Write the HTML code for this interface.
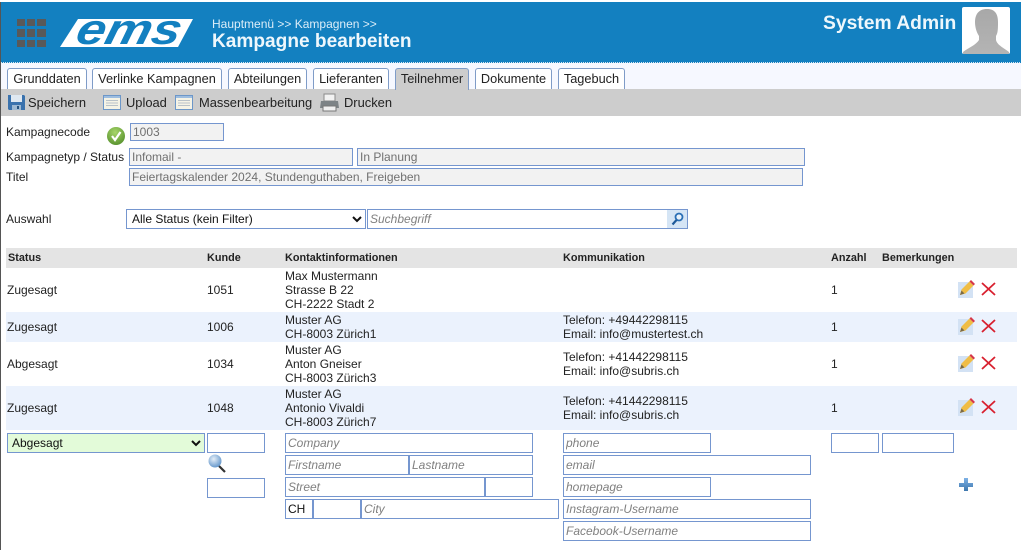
<!DOCTYPE html>
<html lang="de"><head><meta charset="utf-8"><title>Kampagne bearbeiten</title>
<style>
html,body{margin:0;padding:0;background:#fff;width:1021px;height:550px;overflow:hidden}
body{position:relative;font-family:"Liberation Sans",Arial,sans-serif;font-size:12px;color:#222}
.a{position:absolute;white-space:nowrap}
.t{position:absolute;white-space:nowrap;line-height:14px}
.tab{position:absolute;top:68px;height:20px;border:1px solid #7f9cc8;border-bottom:0;border-radius:3px 3px 0 0;background:#fff;box-sizing:content-box;font-size:12.75px;line-height:19px;text-align:center;color:#222}
.tb{position:absolute;top:95px;font-size:12.9px;line-height:15px;color:#222;white-space:nowrap}
.i{position:absolute;box-sizing:border-box;border:1px solid #7596cf;background:#fff;height:20px;margin:0;padding:0 2px 0 2px;font:12px "Liberation Sans",Arial,sans-serif;color:#111;outline:0;border-radius:0}
select.i{padding:0}
.i::placeholder{color:#808080;font-style:italic;opacity:1}
.ro{background:#f2f2f2;color:#707070;height:18px}
.h{position:absolute;top:252px;font-weight:bold;font-size:10.85px;line-height:12px;color:#222;white-space:nowrap}
.row{position:absolute;left:6px;width:1011px}
svg{position:absolute;display:block;overflow:visible}
</style></head><body>
<div class="a" style="left:0;top:2px;width:1021px;height:60px;background:#1380c0"></div>
<div class="a" style="left:0;top:62px;width:1021px;height:1px;background:repeating-linear-gradient(90deg,#1380c0 0 1px,#d9e8f3 1px 2px)"></div>
<div class="a" style="left:0;top:63px;width:1021px;height:26px;background:#f6f8ff"></div>
<div class="a" style="left:0;top:89px;width:1021px;height:27px;background:#cdcdcd"></div>
<div class="a" style="left:0;top:2px;width:1px;height:548px;background:#555"></div>

<svg style="left:17px;top:19px" width="29" height="28"><g fill="#595959"><rect width="8" height="7"/><rect x="10" width="8" height="7"/><rect x="20" width="9" height="7"/><rect y="10" width="8" height="8"/><rect x="10" y="10" width="8" height="8"/><rect x="20" y="10" width="9" height="8"/><rect y="21" width="8" height="7"/><rect x="10" y="21" width="8" height="7"/><rect x="20" y="21" width="9" height="7"/></g></svg>
<svg style="left:60px;top:19px" width="134" height="28" viewBox="0 0 134 28"><path d="M18 0H133L118 28H0Z" fill="#fff"/><text transform="translate(14 25) skewX(-14)" x="0" y="0" font-family="Liberation Sans" font-weight="bold" font-style="italic" font-size="43" fill="#1380c0" textLength="104" lengthAdjust="spacingAndGlyphs">ems</text></svg>

<div class="t" style="left:212px;top:17px;font-size:12px;color:#dcedf8">Hauptmenü &gt;&gt; Kampagnen &gt;&gt;</div>
<div class="t" style="left:212px;top:32px;font-size:19.1px;line-height:20px;font-weight:bold;color:#eef7fc">Kampagne bearbeiten</div>
<div class="t" style="left:823px;top:13px;font-size:19.3px;line-height:21px;font-weight:bold;color:#eef7fc">System Admin</div>
<svg style="left:962px;top:7px" width="48" height="47" viewBox="0 0 48 47"><defs><linearGradient id="g" x1="0" y1="0" x2="0" y2="1"><stop offset="0" stop-color="#a8a8a8"/><stop offset="1" stop-color="#b4b4b4"/></linearGradient></defs><rect width="48" height="47" rx="2" fill="#fff"/><path d="M25 2C17 2 13 7 13 15C13 21 15 26 17 29V33C14 38 6 41 1 45L1 47H47V45C42 41 35 38 34 33V29C36 26 36 21 36 15C36 7 33 2 25 2Z" fill="url(#g)"/></svg>

<div class="tab" style="left:7px;width:78px">Grunddaten</div>
<div class="tab" style="left:92px;width:128px">Verlinke Kampagnen</div>
<div class="tab" style="left:228px;width:77px">Abteilungen</div>
<div class="tab" style="left:313px;width:74px">Lieferanten</div>
<div class="tab" style="left:395px;width:72px;background:#cdcdcd;height:21px">Teilnehmer</div>
<div class="tab" style="left:475px;width:75px">Dokumente</div>
<div class="tab" style="left:558px;width:65px">Tagebuch</div>

<svg style="left:8px;top:94px" width="17" height="17" viewBox="0 0 17 17"><path d="M0 1H16L17 2V16H1L0 15Z" fill="#3a72ad"/><rect x="3" y="1" width="11" height="7" fill="#dfe8f1"/><rect x="4" y="11" width="9" height="5" fill="#9db8d2"/><rect x="9" y="12" width="2" height="3" fill="#24527f"/></svg>
<div class="tb" style="left:28px">Speichern</div>
<svg style="left:103px;top:95px" width="18" height="15" viewBox="0 0 18 15"><rect x=".5" y=".5" width="17" height="14" fill="#f5f3e6" stroke="#6d97c8"/><rect x="1" y="1" width="16" height="2" fill="#9dbde0"/><path d="M3 5.500H15M3 8H15M3 10.500H15" stroke="#b9c2c9"/></svg>
<div class="tb" style="left:126px">Upload</div>
<svg style="left:175px;top:95px" width="18" height="15" viewBox="0 0 18 15"><rect x=".5" y=".5" width="17" height="14" fill="#f5f3e6" stroke="#6d97c8"/><rect x="1" y="1" width="16" height="2" fill="#9dbde0"/><path d="M3 5.500H15M3 8H15M3 10.500H15" stroke="#b9c2c9"/></svg>
<div class="tb" style="left:199px">Massenbearbeitung</div>
<svg style="left:320px;top:94px" width="19" height="18" viewBox="0 0 19 18"><rect x="4" y="0" width="11" height="7" fill="#f2f2f2" stroke="#8a8a8a"/><path d="M1 7H18L19 14H0Z" fill="#7d8386"/><rect x="3" y="12" width="13" height="5" fill="#f0f0f0" stroke="#777"/></svg>
<div class="tb" style="left:344px">Drucken</div>

<div class="t" style="left:6px;top:125px">Kampagnecode</div>
<svg style="left:107px;top:127px" width="18" height="18" viewBox="0 0 18 18"><defs><radialGradient id="gr" cx=".45" cy=".3" r=".8"><stop offset="0" stop-color="#a7d66a"/><stop offset="1" stop-color="#4f8a27"/></radialGradient></defs><circle cx="9" cy="9" r="9" fill="url(#gr)"/><path d="M5 9L8 13L13.500 5" fill="none" stroke="#fff" stroke-width="2.200"/></svg>
<input class="i ro" style="left:130px;top:123px;width:94px" value="1003" readonly>
<div class="t" style="left:6px;top:150px">Kampagnetyp / Status</div>
<input class="i ro" style="left:129px;top:148px;width:224px" value="Infomail -" readonly>
<input class="i ro" style="left:357px;top:148px;width:448px" value="In Planung" readonly>
<div class="t" style="left:6px;top:170px">Titel</div>
<input class="i ro" style="left:129px;top:168px;width:674px" value="Feiertagskalender 2024, Stundenguthaben, Freigeben" readonly>
<div class="t" style="left:6px;top:212px">Auswahl</div>
<select class="i" style="left:126px;top:209px;width:240px;padding-left:1px"><option>Alle Status (kein Filter)</option></select>
<input class="i" style="left:367px;top:209px;width:321px" placeholder="Suchbegriff">
<div class="a" style="left:667px;top:210px;width:20px;height:18px;background:#d5e5f5"></div>
<svg style="left:671px;top:212px" width="13" height="14" viewBox="0 0 13 14"><circle cx="8" cy="5" r="3.500" fill="#e8f2fb" stroke="#2a6fb5" stroke-width="1.800"/><path d="M5.500 8L1.500 12.500" stroke="#1f5a99" stroke-width="2.200"/></svg>

<div class="a" style="left:6px;top:248px;width:1011px;height:20px;background:#e4e4e4"></div>
<div class="h" style="left:8px">Status</div>
<div class="h" style="left:207px">Kunde</div>
<div class="h" style="left:285px">Kontaktinformationen</div>
<div class="h" style="left:563px">Kommunikation</div>
<div class="h" style="left:831px">Anzahl</div>
<div class="h" style="left:882px">Bemerkungen</div>

<div class="row" style="top:312px;height:30px;background:#ebf2fd"></div>
<div class="row" style="top:386px;height:44px;background:#ebf2fd"></div>

<div class="t" style="left:7px;top:283px">Zugesagt</div><div class="t" style="left:207px;top:283px">1051</div>
<div class="t" style="left:285px;top:269px">Max Mustermann<br>Strasse B 22<br>CH-2222 Stadt 2</div>
<div class="t" style="left:831px;top:283px">1</div>

<div class="t" style="left:7px;top:320px">Zugesagt</div><div class="t" style="left:207px;top:320px">1006</div>
<div class="t" style="left:285px;top:313px">Muster AG<br>CH-8003 Zürich1</div>
<div class="t" style="left:563px;top:313px">Telefon: +49442298115<br>Email: info@mustertest.ch</div>
<div class="t" style="left:831px;top:320px">1</div>

<div class="t" style="left:7px;top:357px">Abgesagt</div><div class="t" style="left:207px;top:357px">1034</div>
<div class="t" style="left:285px;top:343px">Muster AG<br>Anton Gneiser<br>CH-8003 Zürich3</div>
<div class="t" style="left:563px;top:350px">Telefon: +41442298115<br>Email: info@subris.ch</div>
<div class="t" style="left:831px;top:357px">1</div>

<div class="t" style="left:7px;top:401px">Zugesagt</div><div class="t" style="left:207px;top:401px">1048</div>
<div class="t" style="left:285px;top:387px">Muster AG<br>Antonio Vivaldi<br>CH-8003 Zürich7</div>
<div class="t" style="left:563px;top:394px">Telefon: +41442298115<br>Email: info@subris.ch</div>
<div class="t" style="left:831px;top:401px">1</div>

<svg style="left:958px;top:280px" width="17" height="18" viewBox="0 0 17 18"><rect y="2" width="15" height="16" fill="#d3e2f4"/><path d="M2 15L3.500 9.500L11.500 1.500L15.500 5.500L7.500 13.500Z" fill="#f0bd45"/><path d="M11.500 1.500L13 0L17 4L15.500 5.500Z" fill="#d6364a"/><path d="M2 15L3.500 10.500L6.500 13.500Z" fill="#7a6a48"/></svg>
<svg style="left:981px;top:282px" width="15" height="14" viewBox="0 0 15 14"><path d="M1 1L14 13M14 1L1 13" stroke="#d8202f" stroke-width="1.800"/></svg>
<svg style="left:958px;top:317px" width="17" height="18" viewBox="0 0 17 18"><rect y="2" width="15" height="16" fill="#d3e2f4"/><path d="M2 15L3.500 9.500L11.500 1.500L15.500 5.500L7.500 13.500Z" fill="#f0bd45"/><path d="M11.500 1.500L13 0L17 4L15.500 5.500Z" fill="#d6364a"/><path d="M2 15L3.500 10.500L6.500 13.500Z" fill="#7a6a48"/></svg>
<svg style="left:981px;top:319px" width="15" height="14" viewBox="0 0 15 14"><path d="M1 1L14 13M14 1L1 13" stroke="#d8202f" stroke-width="1.800"/></svg>
<svg style="left:958px;top:354px" width="17" height="18" viewBox="0 0 17 18"><rect y="2" width="15" height="16" fill="#d3e2f4"/><path d="M2 15L3.500 9.500L11.500 1.500L15.500 5.500L7.500 13.500Z" fill="#f0bd45"/><path d="M11.500 1.500L13 0L17 4L15.500 5.500Z" fill="#d6364a"/><path d="M2 15L3.500 10.500L6.500 13.500Z" fill="#7a6a48"/></svg>
<svg style="left:981px;top:356px" width="15" height="14" viewBox="0 0 15 14"><path d="M1 1L14 13M14 1L1 13" stroke="#d8202f" stroke-width="1.800"/></svg>
<svg style="left:958px;top:398px" width="17" height="18" viewBox="0 0 17 18"><rect y="2" width="15" height="16" fill="#d3e2f4"/><path d="M2 15L3.500 9.500L11.500 1.500L15.500 5.500L7.500 13.500Z" fill="#f0bd45"/><path d="M11.500 1.500L13 0L17 4L15.500 5.500Z" fill="#d6364a"/><path d="M2 15L3.500 10.500L6.500 13.500Z" fill="#7a6a48"/></svg>
<svg style="left:981px;top:400px" width="15" height="14" viewBox="0 0 15 14"><path d="M1 1L14 13M14 1L1 13" stroke="#d8202f" stroke-width="1.800"/></svg>

<select class="i" style="left:7px;top:433px;width:198px;background:#e3fbd9"><option>Abgesagt</option></select>
<input class="i" style="left:207px;top:433px;width:58px">
<svg style="left:208px;top:454px" width="18" height="19" viewBox="0 0 18 19"><defs><radialGradient id="m" cx=".4" cy=".35" r=".7"><stop offset="0" stop-color="#e4eef8"/><stop offset="1" stop-color="#5f93c9"/></radialGradient></defs><path d="M11 12L17 18" stroke="#333" stroke-width="2.200"/><circle cx="7" cy="7" r="6.500" fill="url(#m)"/></svg>
<input class="i" style="left:207px;top:478px;width:58px">
<input class="i" style="left:285px;top:433px;width:248px" placeholder="Company">
<input class="i" style="left:285px;top:455px;width:124px" placeholder="Firstname">
<input class="i" style="left:409px;top:455px;width:124px" placeholder="Lastname">
<input class="i" style="left:285px;top:477px;width:200px" placeholder="Street">
<input class="i" style="left:485px;top:477px;width:48px">
<input class="i" style="left:285px;top:499px;width:28px" value="CH">
<input class="i" style="left:313px;top:499px;width:48px">
<input class="i" style="left:361px;top:499px;width:198px" placeholder="City">
<input class="i" style="left:563px;top:433px;width:148px" placeholder="phone">
<input class="i" style="left:563px;top:455px;width:248px" placeholder="email">
<input class="i" style="left:563px;top:477px;width:148px" placeholder="homepage">
<input class="i" style="left:563px;top:499px;width:248px" placeholder="Instagram-Username">
<input class="i" style="left:563px;top:521px;width:248px" placeholder="Facebook-Username">
<input class="i" style="left:831px;top:433px;width:48px">
<input class="i" style="left:882px;top:433px;width:72px">
<svg style="left:959px;top:478px" width="14" height="14" viewBox="0 0 14 14"><defs><linearGradient id="p" x1="0" y1="0" x2="0" y2="1"><stop offset="0" stop-color="#7fb2e6"/><stop offset="1" stop-color="#3d77ad"/></linearGradient></defs><path d="M5 0H9V5H14V9H9V13H5V9H0V5H5Z" fill="url(#p)"/></svg>
</body></html>
